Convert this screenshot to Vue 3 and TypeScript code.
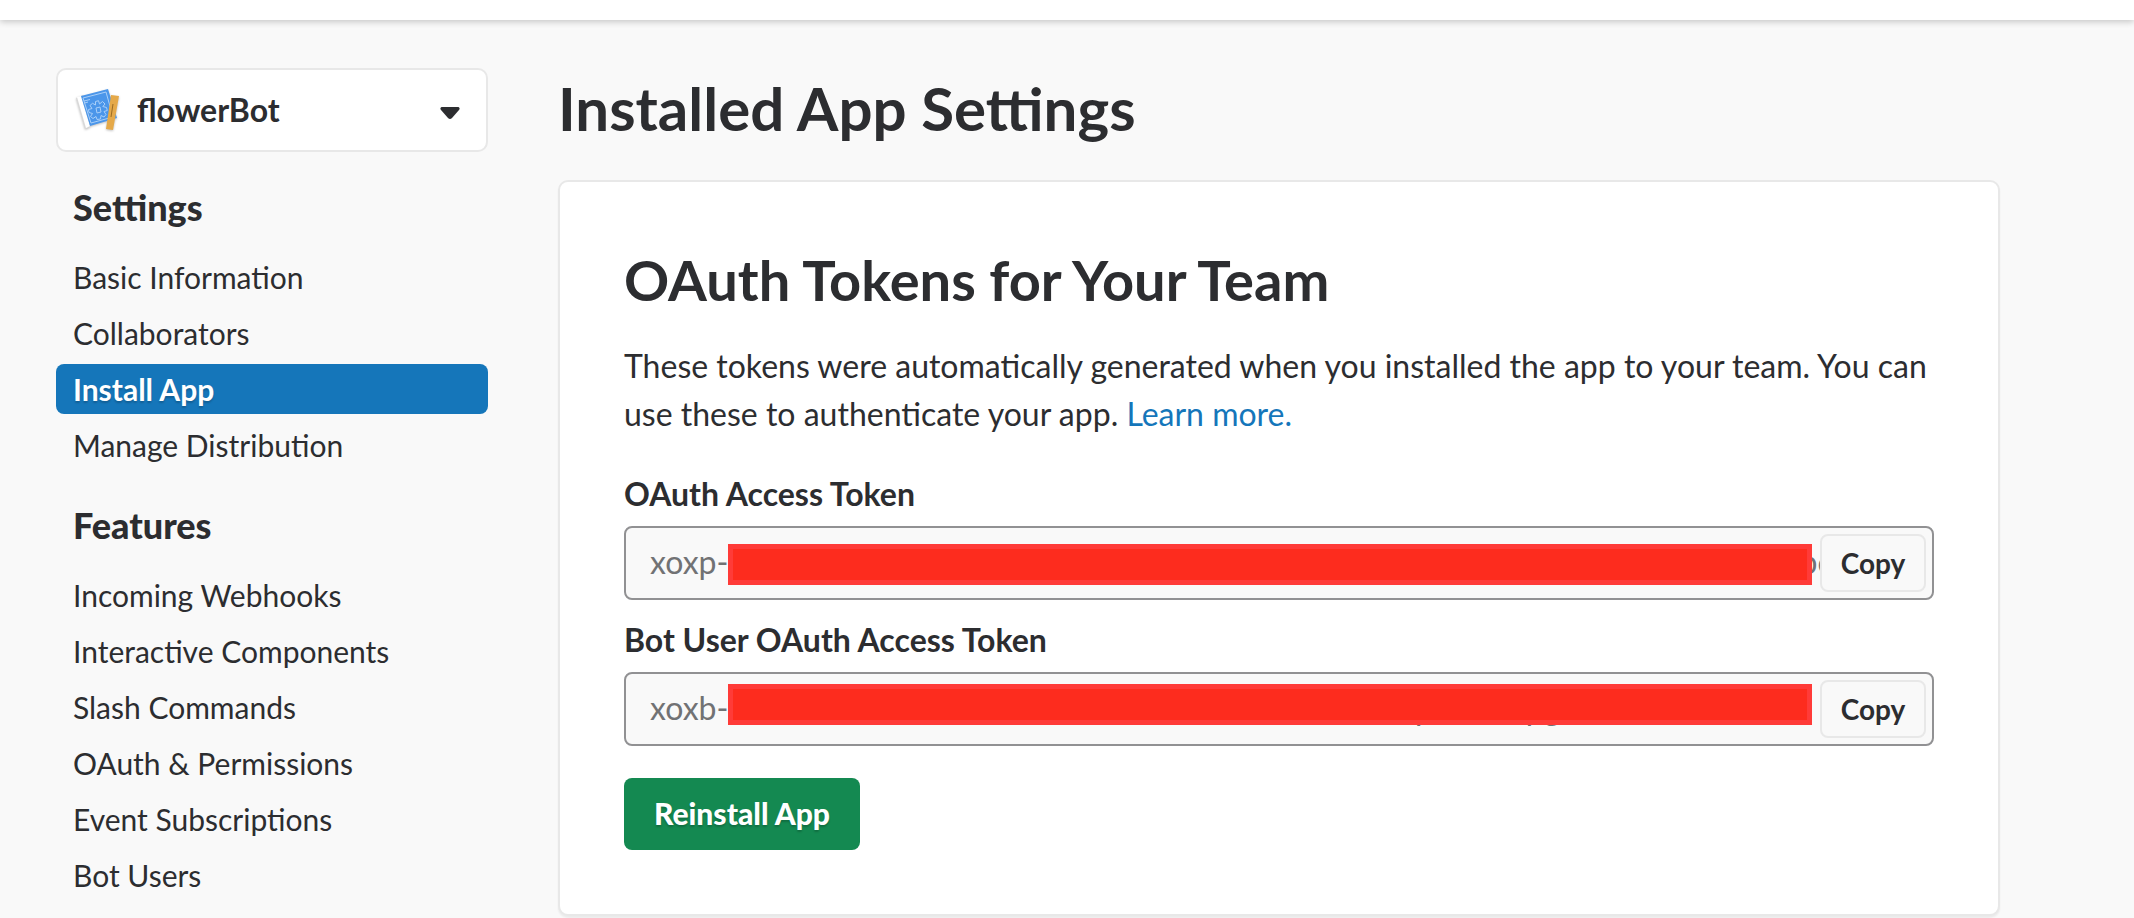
<script setup lang="ts">
interface NavGroup {
  title: string
  items: string[]
}

interface TokenField {
  id: string
  label: string
  value: string
  raised: boolean
}

const current = 'Install App'

const groups: NavGroup[] = [
  {
    title: 'Settings',
    items: ['Basic Information', 'Collaborators', 'Install App', 'Manage Distribution'],
  },
  {
    title: 'Features',
    items: [
      'Incoming Webhooks',
      'Interactive Components',
      'Slash Commands',
      'OAuth & Permissions',
      'Event Subscriptions',
      'Bot Users',
    ],
  },
]

const tokens: TokenField[] = [
  {
    id: 'oauth-token',
    label: 'OAuth Access Token',
    value: 'xoxp-' + '0'.repeat(56) + 'aabc',
    raised: false,
  },
  {
    id: 'bot-token',
    label: 'Bot User OAuth Access Token',
    value: 'xoxb-' + '0'.repeat(37) + 'p00000pg',
    raised: true,
  },
]
</script>

<template>
  <div class="page">
    <header class="topbar"></header>
    <div class="layout">
      <aside class="sidebar">
        <button class="picker" type="button">
          <svg class="app-icon" viewBox="0 0 48 48" aria-hidden="true">
            <path d="M4 12 11 9 18 41 13 43Z" fill="#d9d9d9" />
            <path d="M5 11 9 10 18 40 14 42Z" fill="#fff" />
            <path d="M9 10 36 3 45 32 18 40Z" fill="#4b96ea" />
            <g fill="none" stroke="#a9cff8" stroke-width="1">
              <path d="M11 12 34 6 41 31 19 37Z" />
              <path d="M12 15 18 13.500M12.500 17 16 16" />
              <path
                d="M23.500 15.500 26.500 14.700 27.500 18 30.500 15.500 33 18 30.800 20.500 34.500 21.500 35.300 24.500 32 25.500 34 28.500 32 31 29 29.500 28.500 33 25 33.500 24 30.500 21 32.500 18.500 30.500 20.500 27.500 17 26.500 16.500 23.500 20 22.500 18 19.500 20.500 17.300 23.500 19Z"
              />
              <path d="M24 22 28 21 29 26 25 27Z" />
            </g>
            <path d="M39 9 47 10 41 44 34 43Z" fill="#e5a949" />
            <path d="M41 18 39 31" stroke="#9a6a22" stroke-width="1" fill="none" />
          </svg>
          <span class="app-name">flowerBot</span>
          <svg class="caret" viewBox="0 0 20 12" aria-hidden="true">
            <path d="M1.500 0H18.500Q20.500 1 19 3L12 11Q10 13 8 11L1 3Q-.5 1 1.500 0Z" fill="#2c2d30" />
          </svg>
        </button>

        <nav v-for="group in groups" :key="group.title" class="group" :aria-label="group.title">
          <h3>{{ group.title }}</h3>
          <ul>
            <li v-for="item in group.items" :key="item">
              <a
                href="#"
                :class="{ active: item === current }"
                :aria-current="item === current ? 'page' : undefined"
              >{{ item }}</a>
            </li>
          </ul>
        </nav>
      </aside>

      <main class="main">
        <h1>Installed App Settings</h1>
        <section class="card">
          <h2>OAuth Tokens for Your Team</h2>
          <p>
            These tokens were automatically generated when you installed the app to your team. You can
            use these to authenticate your app. <a href="#">Learn more.</a>
          </p>
          <div v-for="token in tokens" :key="token.id" class="field">
            <label :for="token.id">{{ token.label }}</label>
            <div class="token">
              <input :id="token.id" type="text" readonly :value="token.value" />
              <span class="redaction" :class="{ raised: token.raised }"></span>
              <button class="copy" type="button">Copy</button>
            </div>
          </div>
          <button class="reinstall" type="button">Reinstall App</button>
        </section>
      </main>
    </div>
  </div>
</template>

<style>
html {
  background: #f9f9f9;
}

body {
  margin: 0;
}
</style>

<style scoped>
.page {
  height: 100vh;
  overflow: hidden;
  background: #f9f9f9;
  color: #2c2d30;
  font-family: Lato, 'Liberation Sans', sans-serif;
  font-size: 32px;
  line-height: 48px;
}

.page * {
  box-sizing: border-box;
}

button,
input {
  margin: 0;
  font: inherit;
  color: inherit;
}

.topbar {
  height: 20px;
  background: #fff;
  box-shadow: 0 2px 6px rgba(0, 0, 0, 0.2);
}

.layout {
  display: flex;
  align-items: flex-start;
  gap: 70px;
  padding: 48px 134px 0 56px;
}

.sidebar {
  flex: 0 0 432px;
}

.picker {
  display: flex;
  align-items: center;
  width: 100%;
  height: 84px;
  padding: 0 26px 0 14px;
  border: 2px solid #e8e8e8;
  border-radius: 10px;
  background: #fff;
  text-align: left;
}

.app-icon {
  width: 48px;
  height: 48px;
  margin-right: 17px;
  filter: drop-shadow(0 1px 1px rgba(0, 0, 0, 0.25));
}

.app-name {
  flex: 1;
  font-weight: 700;
}

.caret {
  width: 20px;
  height: 12px;
  margin-top: 6px;
}

.group {
  padding-top: 31px;
}

.group h3 {
  margin: 0 0 21px;
  padding-left: 17px;
  font-size: 36px;
  font-weight: 900;
  line-height: 48px;
}

.group ul {
  display: flex;
  flex-direction: column;
  gap: 6px;
  margin: 0;
  padding: 0;
  list-style: none;
}

.group a {
  display: block;
  height: 50px;
  padding-left: 17px;
  border-radius: 8px;
  color: inherit;
  font-size: 30px;
  line-height: 50px;
  text-decoration: none;
}

.group a.active {
  background: #1576ba;
  color: #fff;
  font-weight: 700;
  text-shadow: 0 2px 2px rgba(0, 0, 0, 0.2);
}

.main {
  flex: 1;
  min-width: 0;
}

h1 {
  margin: 0 0 32px;
  font-size: 60px;
  font-weight: 700;
  line-height: 80px;
}

.card {
  padding: 60px 64px 64px;
  border: 2px solid #e8e8e8;
  border-radius: 10px;
  background: #fff;
  box-shadow: 0 2px 2px rgba(0, 0, 0, 0.06);
}

h2 {
  margin: 0 0 24px;
  font-size: 56px;
  font-weight: 700;
  line-height: 76px;
}

p {
  margin: 0 0 32px;
}

p a {
  color: #1576ba;
  text-decoration: none;
}

.field {
  margin-bottom: 16px;
}

.field label {
  display: block;
  margin-bottom: 8px;
  font-weight: 700;
}

.token {
  position: relative;
}

.token input {
  display: block;
  width: 100%;
  height: 74px;
  padding: 0 24px 4px;
  border: 2px solid #919193;
  border-radius: 8px;
  background: #f9f9f9;
  color: #717274;
  outline: 0;
}

.redaction {
  position: absolute;
  top: 18px;
  right: 122px;
  left: 104px;
  height: 41px;
  border: 5px solid #ff3b38;
  background: #fd2c1e;
}

.redaction.raised {
  top: 12px;
}

.copy {
  position: absolute;
  top: 8px;
  right: 8px;
  width: 106px;
  height: 58px;
  padding: 0;
  border: 2px solid #e8e8e8;
  border-radius: 8px;
  background: #f9f9f9;
  font-size: 28px;
  font-weight: 700;
}

.reinstall {
  display: block;
  height: 72px;
  margin-top: 32px;
  padding: 0 30px 2px;
  border: 0;
  border-radius: 8px;
  background: #148951;
  color: #fff;
  font-size: 30px;
  font-weight: 900;
  text-shadow: 0 2px 2px rgba(0, 0, 0, 0.2);
}
</style>
